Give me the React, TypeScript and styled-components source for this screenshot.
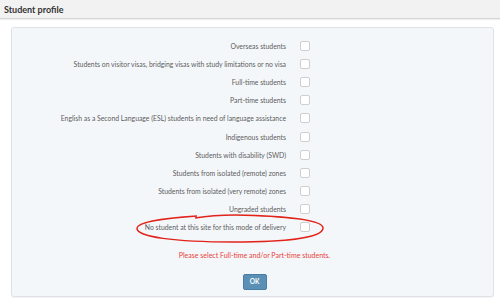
import React from "react";
import styled, { createGlobalStyle } from "styled-components";

const GlobalStyle = createGlobalStyle`
    html, body {
        margin: 0;
        padding: 0;
        background: #ffffff;
        font-family: Lato, "Open Sans", sans-serif;
    }
`;

const StyledPage = styled.div`
    width: 500px;
    height: 304px;
    overflow: hidden;
`;
StyledPage.displayName = "StyledPage";

const StyledHeader = styled.div`
    height: 18px;
    background: #f2f2f2;
    border-bottom: 1px solid #d6d6d6;
    box-shadow: 0 1px 1px rgba(0,0,0,.06);
    display: flex;
    align-items: center;
    padding-left: 4px;
    font-family: Lato, sans-serif;
    font-weight: bold;
    font-size: 9px;
    color: #333333;
`;
StyledHeader.displayName = "StyledHeader";

const StyledBody = styled.div`
    padding: 8px 6px 0 11px;
`;
StyledBody.displayName = "StyledBody";

const StyledPanel = styled.div`
    position: relative;
    height: 270px;
    box-sizing: border-box;
    background: #f4f7fa;
    border: 1px solid #dfe3e7;
    border-radius: 3px;
    box-shadow: 0 1px 1px rgba(0,0,0,.05);
    padding-top: 9px;
    display: flex;
    flex-direction: column;
    align-items: center;
`;
StyledPanel.displayName = "StyledPanel";

const StyledRows = styled.div`
    align-self: stretch;
    display: flex;
    flex-direction: column;
`;
StyledRows.displayName = "StyledRows";

const StyledRow = styled.label`
    display: grid;
    grid-template-columns: 274px 10px;
    column-gap: 14px;
    align-items: center;
    height: 18.1px;
    font-family: Lato, sans-serif;
    font-size: 6.85px;
    color: #5c5c5c;
    > span {
        text-align: right;
        white-space: nowrap;
    }
`;
StyledRow.displayName = "StyledRow";

const StyledCheckbox = styled.span`
    width: 10px;
    height: 10px;
    box-sizing: border-box;
    border: 1px solid #cfcfcf;
    border-radius: 2px;
    background: #ffffff;
`;
StyledCheckbox.displayName = "StyledCheckbox";

const StyledError = styled.div`
    margin-top: 15px;
    margin-left: 4px;
    font-family: Lato, sans-serif;
    font-size: 7px;
    line-height: 8.5px;
    color: #e8413a;
`;
StyledError.displayName = "StyledError";

const StyledButton = styled.button`
    margin-top: 14px;
    margin-left: 4px;
    width: 24px;
    height: 16px;
    padding: 0;
    border: 1px solid #4a7ea6;
    border-radius: 2px;
    background: #5a8fb6;
    color: #ffffff;
    font-family: Lato, sans-serif;
    font-weight: bold;
    font-size: 6.5px;
`;
StyledButton.displayName = "StyledButton";

const StyledCircle = styled.svg`
    position: absolute;
    left: 123px;
    top: 185px;
    overflow: visible;
`;
StyledCircle.displayName = "StyledCircle";

const options = [
    "Overseas students",
    "Students on visitor visas, bridging visas with study limitations or no visa",
    "Full-time students",
    "Part-time students",
    "English as a Second Language (ESL) students in need of language assistance",
    "Indigenous students",
    "Students with disability (SWD)",
    "Students from isolated (remote) zones",
    "Students from isolated (very remote) zones",
    "Ungraded students",
    "No student at this site for this mode of delivery",
];

export default function App() {
    return (
        <StyledPage>
            <GlobalStyle />
            <StyledHeader>Student profile</StyledHeader>
            <StyledBody>
                <StyledPanel>
                    <StyledRows>
                        {options.map((option) =>
                            <StyledRow key={option}>
                                <span>{option}</span>
                                <StyledCheckbox />
                            </StyledRow>
                        )}
                    </StyledRows>
                    <StyledError>Please select Full-time and/or Part-time students.</StyledError>
                    <StyledButton>OK</StyledButton>
                    <StyledCircle width="190" height="32" viewBox="0 0 190 32">
                        <path
                            d="M62 3 C 30 5, 3 9, 2 15 C 1 24, 40 29, 98 29 C 150 29, 188 25, 188 15 C 188 7, 150 3, 100 2 C 85 2, 72 3, 60 5"
                            fill="none"
                            stroke="#e2231a"
                            strokeWidth="1.5"
                        />
                    </StyledCircle>
                </StyledPanel>
            </StyledBody>
        </StyledPage>
    );
}
